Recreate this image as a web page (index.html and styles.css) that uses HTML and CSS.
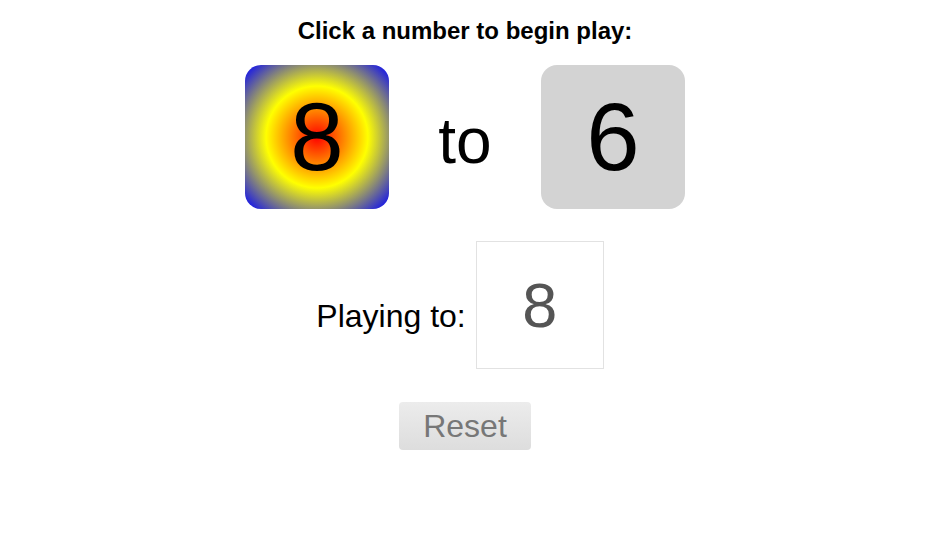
FILE: index.html
```html
<!DOCTYPE html>
<html>
<head>
<meta charset="utf-8">
<link rel="stylesheet" href="styles.css">
</head>
<body>
<div class="page">
  <h1 class="title">Click a number to begin play:</h1>
  <div class="choices">
    <div class="tile tile-active">8</div>
    <div class="to">to</div>
    <div class="tile tile-plain">6</div>
  </div>
  <div class="playing">
    <span class="playing-label">Playing to:</span>
    <div class="target">8</div>
  </div>
  <button class="reset">Reset</button>
</div>
</body>
</html>
```
FILE: styles.css
```css
html, body {
  margin: 0;
  padding: 0;
  background: #fff;
}
body {
  font-family: "Liberation Sans", Arial, sans-serif;
  color: #000;
}
.page {
  display: flex;
  flex-direction: column;
  align-items: center;
  width: 930px;
  padding-top: 16px;
}
.title {
  margin: 0;
  font-size: 24px;
  font-weight: bold;
  line-height: 30px;
}
.choices {
  display: flex;
  align-items: center;
  margin-top: 19px;
}
.tile {
  width: 144px;
  height: 144px;
  border-radius: 16px;
  display: flex;
  align-items: center;
  justify-content: center;
  font-size: 96px;
}
.tile-active {
  background: radial-gradient(red, yellow, blue);
}
.tile-plain {
  background: #d3d3d3;
}
.to {
  width: 152px;
  text-align: center;
  font-size: 64px;
  padding-top: 8px;
}
.playing {
  display: flex;
  align-items: center;
  margin-top: 32px;
  margin-left: -10px;
}
.playing-label {
  font-size: 32px;
  margin-right: 10px;
  padding-top: 22px;
}
.target {
  width: 126px;
  height: 126px;
  border: 1px solid #e2e2e2;
  display: flex;
  align-items: center;
  justify-content: center;
  font-size: 63px;
  color: #555;
}
.reset {
  margin-top: 33px;
  width: 132px;
  height: 48px;
  border: none;
  border-radius: 4px;
  background: linear-gradient(#ececec, #dddddd);
  color: #777;
  font-family: "Liberation Sans", Arial, sans-serif;
  font-size: 32px;
  padding: 0;
}
```
